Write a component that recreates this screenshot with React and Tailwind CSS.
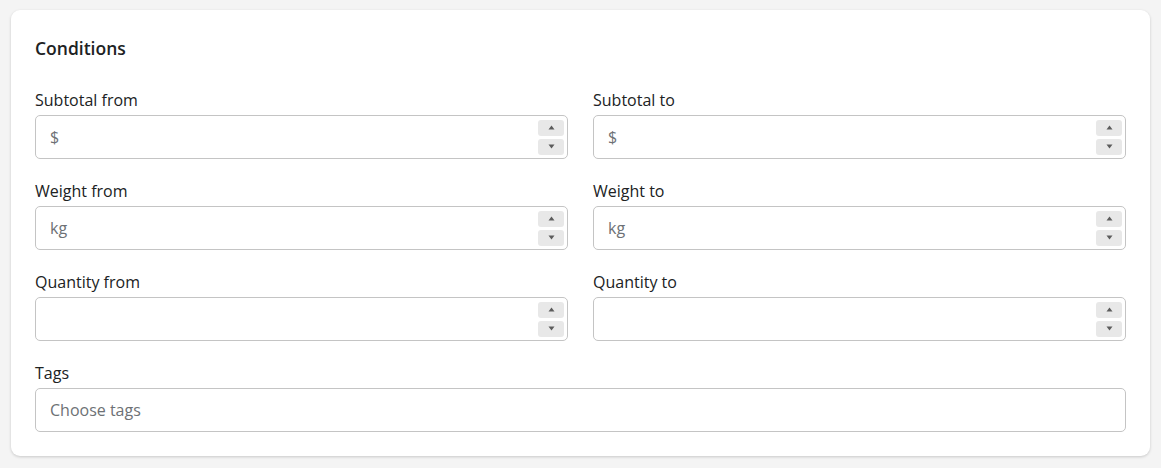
import React from "react";

function Spinner() {
  return (
    <div className="flex flex-col gap-[3px] mr-[3px]">
      <div className="w-[26px] h-[16px] bg-[#e8e8e8] rounded-[3px] flex items-center justify-center">
        <svg width="7" height="5" viewBox="0 0 7 5"><path d="M3.5 0.5 L6.5 4.5 L0.5 4.5 Z" fill="#5c5c5c" /></svg>
      </div>
      <div className="w-[26px] h-[16px] bg-[#e8e8e8] rounded-[3px] flex items-center justify-center">
        <svg width="7" height="5" viewBox="0 0 7 5"><path d="M0.5 0.5 L6.5 0.5 L3.5 4.5 Z" fill="#5c5c5c" /></svg>
      </div>
    </div>
  );
}

function Field({ label, prefix, spinner = true }) {
  return (
    <div className="flex flex-col">
      <div className="text-[16px] leading-[20px] text-[#202223] mb-[5px]">{label}</div>
      <div className="h-[44px] border border-[#c4c4c4] rounded-[5px] bg-white flex items-center pl-[14px]">
        <span className="flex-1 text-[16px] text-[#6d7175]">{prefix}</span>
        {spinner && <Spinner />}
      </div>
    </div>
  );
}

export default function App() {
  return (
    <div className="min-h-[468px] bg-[#f4f4f4] px-[11px] pt-[10px] pb-[12px]" style={{ fontFamily: '"Open Sans", "Noto Sans", sans-serif' }}>
      <div className="bg-white rounded-[9px] shadow-[0_1px_3px_rgba(0,0,0,0.18)] px-[24px] pt-[24px] pb-[24px]">
        <h2 className="text-[17.5px] leading-[28px] font-semibold text-[#202223] mb-[28px]">Conditions</h2>
        <div className="grid grid-cols-2 gap-x-[25px] gap-y-[22px]">
          <Field label="Subtotal from" prefix="$" />
          <Field label="Subtotal to" prefix="$" />
          <Field label="Weight from" prefix="kg" />
          <Field label="Weight to" prefix="kg" />
          <Field label="Quantity from" prefix="" />
          <Field label="Quantity to" prefix="" />
          <div className="col-span-2">
            <Field label="Tags" prefix="Choose tags" spinner={false} />
          </div>
        </div>
      </div>
    </div>
  );
}
